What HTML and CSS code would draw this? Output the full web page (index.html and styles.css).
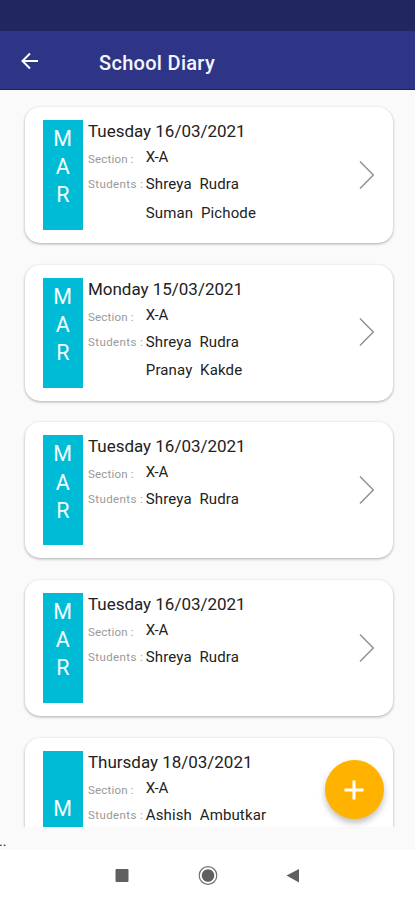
FILE: index.html
```html
<!DOCTYPE html>
<html lang="en">
<head>
<meta charset="utf-8">
<title>School Diary</title>
<link rel="stylesheet" href="styles.css">
</head>
<body>
<div class="status"></div>
<header class="bar">
  <svg class="back" width="18" height="18" viewBox="0 0 18 18"><path d="M17 9H2M9 1.500L1.500 9L9 16.500"/></svg>
  <h1>School Diary</h1>
</header>
<main class="list">
  <article class="card">
    <div class="month"><span>M</span><span>A</span><span>R</span></div>
    <div class="info">
      <div class="date">Tuesday 16/03/2021</div>
      <div class="row"><span class="label section">Section :</span><span class="value">X-A</span></div>
      <div class="row students"><span class="label">Students :</span><div class="names"><span>Shreya&nbsp; Rudra</span><span>Suman&nbsp; Pichode</span></div></div>
    </div>
    <svg class="chev" width="16" height="30" viewBox="0 0 16 30"><path d="M1 1.500L14.300 15L1 28.500"/></svg>
  </article>
  <article class="card">
    <div class="month"><span>M</span><span>A</span><span>R</span></div>
    <div class="info">
      <div class="date">Monday 15/03/2021</div>
      <div class="row"><span class="label section">Section :</span><span class="value">X-A</span></div>
      <div class="row students"><span class="label">Students :</span><div class="names"><span>Shreya&nbsp; Rudra</span><span>Pranay&nbsp; Kakde</span></div></div>
    </div>
    <svg class="chev" width="16" height="30" viewBox="0 0 16 30"><path d="M1 1.500L14.300 15L1 28.500"/></svg>
  </article>
  <article class="card">
    <div class="month"><span>M</span><span>A</span><span>R</span></div>
    <div class="info">
      <div class="date">Tuesday 16/03/2021</div>
      <div class="row"><span class="label section">Section :</span><span class="value">X-A</span></div>
      <div class="row students"><span class="label">Students :</span><div class="names"><span>Shreya&nbsp; Rudra</span></div></div>
    </div>
    <svg class="chev" width="16" height="30" viewBox="0 0 16 30"><path d="M1 1.500L14.300 15L1 28.500"/></svg>
  </article>
  <article class="card">
    <div class="month"><span>M</span><span>A</span><span>R</span></div>
    <div class="info">
      <div class="date">Tuesday 16/03/2021</div>
      <div class="row"><span class="label section">Section :</span><span class="value">X-A</span></div>
      <div class="row students"><span class="label">Students :</span><div class="names"><span>Shreya&nbsp; Rudra</span></div></div>
    </div>
    <svg class="chev" width="16" height="30" viewBox="0 0 16 30"><path d="M1 1.500L14.300 15L1 28.500"/></svg>
  </article>
  <article class="card last">
    <div class="month"><span>M</span></div>
    <div class="info">
      <div class="date">Thursday 18/03/2021</div>
      <div class="row"><span class="label section">Section :</span><span class="value">X-A</span></div>
      <div class="row students"><span class="label">Students :</span><div class="names"><span>Ashish&nbsp; Ambutkar</span></div></div>
    </div>
  </article>
</main>
<div class="foot">..</div>
<nav class="nav">
  <svg width="415" height="49" viewBox="0 0 415 49">
    <rect x="115.500" y="19" width="13" height="13" rx="1"/>
    <circle cx="208" cy="25.500" r="6.300"/>
    <circle class="ring" cx="208" cy="25.500" r="8.800"/>
    <path d="M286.500 25.500L299 19V32.500Z"/>
  </svg>
</nav>
<button class="fab" aria-label="Add"><svg width="20" height="20" viewBox="0 0 20 20"><path d="M10 0.500V19.500M0.500 10H19.500"/></svg></button>
</body>
</html>
```
FILE: styles.css
```css
* { box-sizing: border-box; }
body {
  margin: 0;
  width: 415px;
  height: 900px;
  overflow: hidden;
  position: relative;
  background: #fafafa;
  color: #222;
  font-family: Roboto, "Liberation Sans", sans-serif;
  display: flex;
  flex-direction: column;
}
.status { height: 31px; background: #212661; flex: none; }
.bar {
  height: 59px;
  flex: none;
  display: flex;
  align-items: center;
  padding: 2px 0 0 20.500px;
  background: #2f3586;
  border-bottom: 1px solid #16207c;
}
.back { fill: none; stroke: #fff; stroke-width: 2; }
h1 {
  margin: 3px 0 0 60.500px;
  font-size: 20px;
  font-weight: 500;
  line-height: 24px;
  letter-spacing: .3px;
  color: #f4f6ff;
}
.list {
  height: 737px;
  flex: none;
  overflow: hidden;
  padding: 17px 22px 0 24.500px;
  display: flex;
  flex-direction: column;
  gap: 21.700px;
}
.card {
  height: 136px;
  flex: none;
  display: flex;
  padding: 13px 18px 0 18px;
  background: #fff;
  border-radius: 15px;
  box-shadow: 0 1px 3px rgba(0, 0, 0, .32);
}
.month {
  width: 40.500px;
  height: 110px;
  flex: none;
  display: flex;
  flex-direction: column;
  align-items: center;
  padding-top: 5px;
  background: #00bbd6;
  color: #f2fdff;
  font-size: 21.500px;
  line-height: 28.200px;
}
.last .month { padding-top: 44px; }
.info { flex: 1; padding-left: 5px; }
.date { font-size: 17px; line-height: 23px; height: 22px; letter-spacing: -.02px; white-space: nowrap; }
.row { display: flex; height: 25px; }
.label {
  width: 57.800px;
  flex: none;
  padding-top: 6px;
  font-size: 11.500px;
  line-height: 22px;
  letter-spacing: .4px;
  color: #999;
  white-space: nowrap;
}
.section { letter-spacing: .2px; }
.value { font-size: 15px; line-height: 30px; letter-spacing: -.3px; }
.students { height: auto; }
.names {
  display: flex;
  flex-direction: column;
  padding-top: 3px;
  font-size: 15px;
  line-height: 28.800px;
  letter-spacing: .13px;
  white-space: nowrap;
}
.chev { flex: none; margin: 39.500px .5px 0 0; fill: none; stroke: #929292; stroke-width: 1.500; }
.foot { height: 23px; flex: none; padding-top: 7px; margin-left: -1px; font-size: 14px; line-height: 14px; }
.nav { height: 50px; flex: none; background: #fff; }
.nav svg { display: block; fill: #606060; }
.nav .ring { fill: none; stroke: #707070; stroke-width: 1.200; }
.fab {
  position: absolute;
  left: 324.500px;
  top: 760px;
  width: 59px;
  height: 59px;
  padding: 0;
  border: 0;
  border-radius: 50%;
  background: #ffb300;
  box-shadow: 0 4px 6px rgba(0, 0, 0, .25);
  display: flex;
  align-items: center;
  justify-content: center;
}
.fab svg { fill: none; stroke: #fff; stroke-width: 3; }
```
